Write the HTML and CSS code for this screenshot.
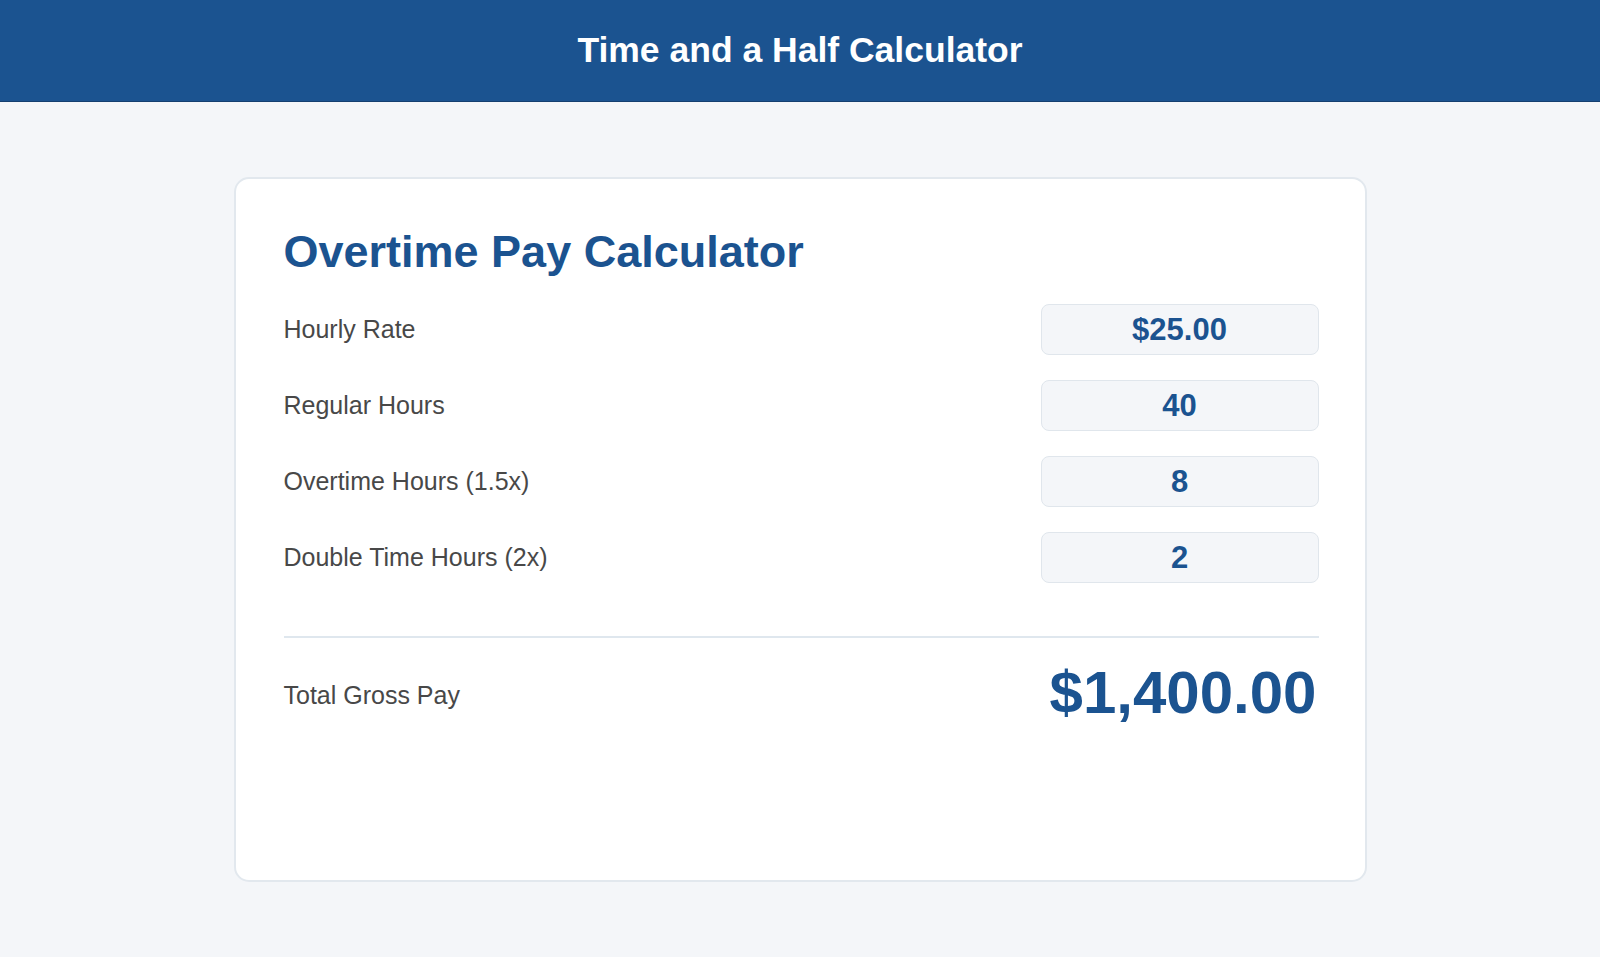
FILE: index.html
```html
<!DOCTYPE html>
<html lang="en">
<head>
<meta charset="utf-8">
<title>Time and a Half Calculator</title>
<link rel="stylesheet" href="styles.css">
</head>
<body>
<header class="topbar">
  <h1 class="topbar-title">Time and a Half Calculator</h1>
</header>
<main class="page">
  <section class="card">
    <h2 class="card-title">Overtime Pay Calculator</h2>
    <div class="field">
      <span class="field-label">Hourly Rate</span>
      <span class="field-value">$25.00</span>
    </div>
    <div class="field">
      <span class="field-label">Regular Hours</span>
      <span class="field-value">40</span>
    </div>
    <div class="field">
      <span class="field-label">Overtime Hours (1.5x)</span>
      <span class="field-value">8</span>
    </div>
    <div class="field">
      <span class="field-label">Double Time Hours (2x)</span>
      <span class="field-value">2</span>
    </div>
    <div class="total">
      <span class="field-label total-label">Total Gross Pay</span>
      <span class="total-value">$1,400.00</span>
    </div>
  </section>
</main>
</body>
</html>
```
FILE: styles.css
```css
* {
  box-sizing: border-box;
}

html, body {
  margin: 0;
  padding: 0;
}

body {
  background: #f4f6f9;
  font-family: "Liberation Sans", Arial, Helvetica, sans-serif;
  color: #444;
}

.topbar {
  height: 102px;
  background: #1b5390;
  border-bottom: 1px solid #143f70;
  display: flex;
  align-items: center;
  justify-content: center;
}

.topbar-title {
  margin: 0;
  color: #fff;
  font-size: 35.5px;
  font-weight: 700;
}

.page {
  padding-top: 75px;
  display: flex;
  justify-content: center;
}

.card {
  width: 1133px;
  min-height: 705px;
  background: #fff;
  border: 2px solid #e2e8ee;
  border-radius: 15px;
  padding: 47px 46px 40px 48px;
}

.card-title {
  margin: 0 0 26px;
  color: #1b5390;
  font-size: 45px;
  font-weight: 700;
}

.field {
  display: flex;
  align-items: center;
  justify-content: space-between;
  margin-bottom: 25px;
}

.field-label {
  font-size: 25px;
  color: #484848;
}

.field-value {
  width: 278px;
  height: 51px;
  background: #f4f6f9;
  border: 1px solid #e0e6ec;
  border-radius: 8px;
  display: flex;
  align-items: center;
  justify-content: center;
  color: #1b5390;
  font-size: 31px;
  font-weight: 700;
}

.total {
  margin-top: 53px;
  border-top: 2px solid #dfe7ee;
  padding-top: 20px;
  display: flex;
  align-items: center;
  justify-content: space-between;
}

.total-label {
  margin-top: 6px;
}

.total-value {
  color: #1b5390;
  font-size: 60px;
  font-weight: 700;
  padding-right: 2px;
}
```
